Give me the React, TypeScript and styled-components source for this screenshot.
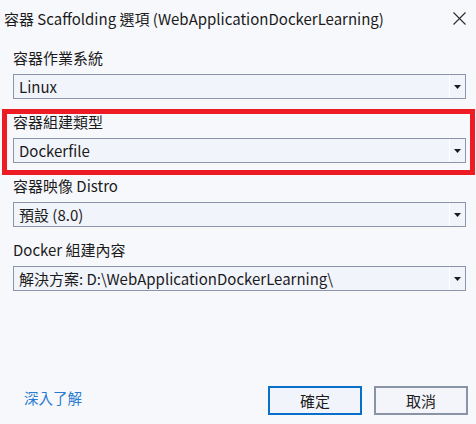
import React from "react";
import styled, { createGlobalStyle } from "styled-components";

const Global = createGlobalStyle`
  html, body { margin: 0; padding: 0; }
  body {
    background: #f7f8fc;
    font-family: "Noto Sans CJK TC", "Noto Sans", sans-serif;
    color: #1b1b1b;
  }
`;

const Dialog = styled.div`
  width: 476px;
  height: 424px;
  display: flex;
  flex-direction: column;
  background: #f7f8fc;
  position: relative;
  overflow: hidden;
`;

const TitleBar = styled.div`
  height: 36px;
  display: flex;
  align-items: center;
  justify-content: space-between;
  padding: 0 10px 0 4px;
`;

const Title = styled.div`
  font-size: 15px;
  color: #1b1b1b;
  white-space: nowrap;
`;

const CloseBtn = styled.div`
  width: 14px;
  height: 14px;
  display: flex;
  align-items: center;
  justify-content: center;
`;

const Content = styled.div`
  padding: 12px 10px 0 13px;
  display: flex;
  flex-direction: column;
`;

const Group = styled.div`
  position: relative;
  display: flex;
  flex-direction: column;
  gap: 6px;
  margin-bottom: 13px;
`;

const Label = styled.div`
  font-size: 15px;
  line-height: 20px;
  height: 20px;
  white-space: nowrap;
`;

const Combo = styled.div`
  height: 25px;
  box-sizing: border-box;
  border: 1px solid #8d96a8;
  background: #f2f4fb;
  display: flex;
  align-items: stretch;
`;

const ComboText = styled.div`
  flex: 1;
  font-size: 15px;
  line-height: 23px;
  padding-left: 5px;
  white-space: nowrap;
`;

const ComboButton = styled.div`
  width: 15px;
  border-left: 1px solid #ffffff;
  display: flex;
  align-items: center;
  justify-content: center;
`;

const Highlight = styled.div`
  position: absolute;
  left: -11px;
  top: -3px;
  width: 473px;
  height: 66px;
  box-sizing: border-box;
  border: 5px solid #ed1c24;
  pointer-events: none;
`;

const Footer = styled.div`
  margin-top: auto;
  display: flex;
  align-items: center;
  padding: 0 8px 9px 24px;
`;

const Link = styled.a`
  font-size: 14.5px;
  color: #2a7bd1;
  text-decoration: none;
  margin-right: auto;
  margin-top: -6px;
`;

const Button = styled.div<{ $primary?: boolean }>`
  width: 94px;
  height: 29px;
  box-sizing: border-box;
  border: ${(p) => (p.$primary ? "2px solid #0a6fc9" : "2px solid #8b93a6")};
  background: ${(p) => (p.$primary ? "#f1f4fb" : "#f4f5fa")};
  display: flex;
  align-items: center;
  justify-content: center;
  font-size: 15px;
  color: #1b1b1b;
  & + & { margin-left: 12px; }
`;

const Arrow = () => (
  <svg width="8" height="4" viewBox="0 0 8 4">
    <path d="M0 0 H7 L3.5 4 Z" fill="#1b1b1b" />
  </svg>
);

const Field = ({ label, value, highlight }: { label: string; value: string; highlight?: boolean }) => (
  <Group>
    <Label>{label}</Label>
    <Combo>
      <ComboText>{value}</ComboText>
      <ComboButton>
        <Arrow />
      </ComboButton>
    </Combo>
    {highlight && <Highlight />}
  </Group>
);

export default function App() {
  return (
    <>
      <Global />
      <Dialog>
        <TitleBar>
          <Title>容器 Scaffolding 選項 (WebApplicationDockerLearning)</Title>
          <CloseBtn>
            <svg width="13" height="13" viewBox="0 0 13 13">
              <path d="M0.5 0.5 L12.5 12.5 M12.5 0.5 L0.5 12.5" stroke="#2b2b2b" strokeWidth="1.1" />
            </svg>
          </CloseBtn>
        </TitleBar>
        <Content>
          <Field label="容器作業系統" value="Linux" />
          <Field label="容器組建類型" value="Dockerfile" highlight />
          <Field label="容器映像 Distro" value="預設 (8.0)" />
          <Field label="Docker 組建內容" value="解決方案: D:\WebApplicationDockerLearning\" />
        </Content>
        <Footer>
          <Link href="#">深入了解</Link>
          <Button $primary>確定</Button>
          <Button>取消</Button>
        </Footer>
      </Dialog>
    </>
  );
}
